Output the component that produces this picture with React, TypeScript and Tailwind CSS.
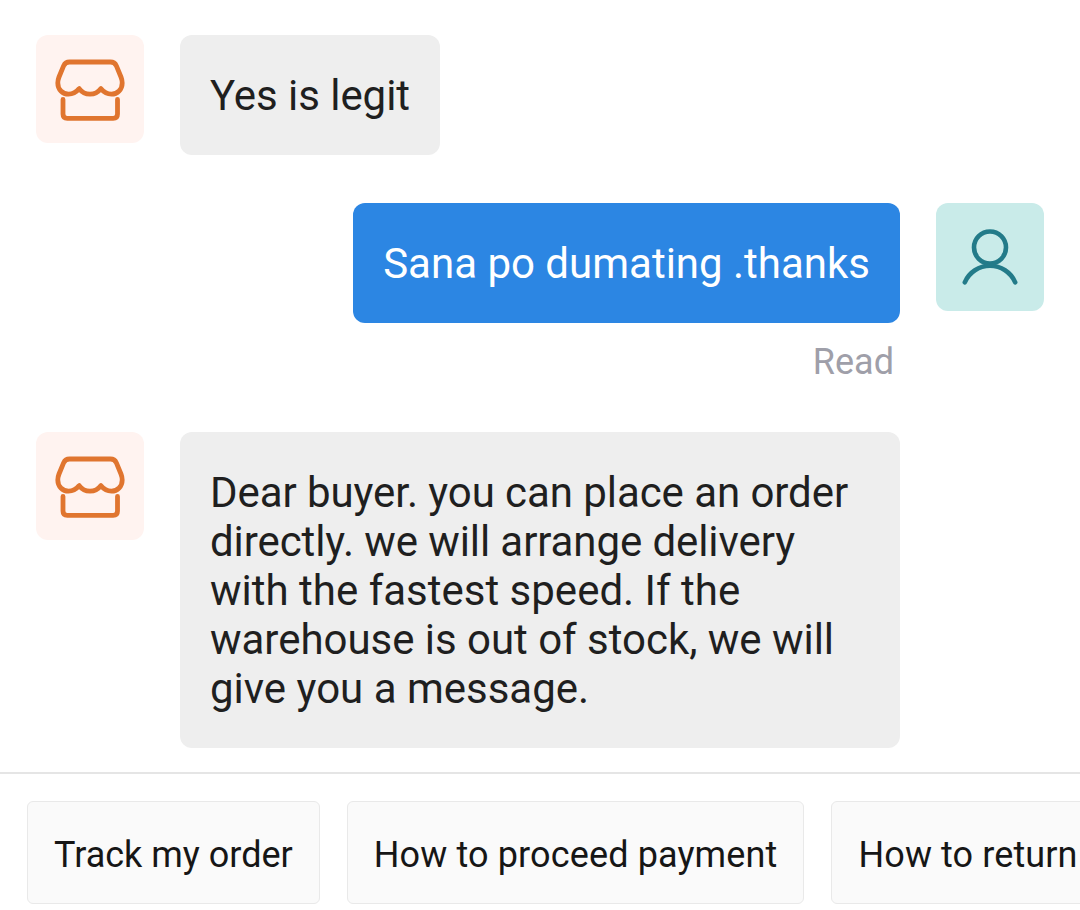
import type { ReactNode } from "react";

function StoreAvatar() {
  return (
    <div className="size-[108px] shrink-0 rounded-xl bg-[#fff3f0]">
      <svg viewBox="0 0 108 108" className="size-full" fill="none" stroke="#e0752f" strokeWidth="4.8" strokeLinecap="round" strokeLinejoin="round">
        <path d="M33.500 27H74.500Q78.600 27 80.300 30.700L85 42Q86.200 45 86.200 48C86.200 54.500 81.500 59.200 75.500 59.200C71 59.200 67.500 57 64.800 53.600C62 57.500 58.300 59.200 54 59.200C49.700 59.200 46 57.500 43.200 53.600C40.500 57 37 59.200 32.500 59.200C26.500 59.200 21.800 54.500 21.800 48Q21.800 45 23 42L27.700 30.700Q29.400 27 33.500 27Z" />
        <path d="M27 64.500V79Q27 83.300 31.300 83.300H77.200Q81.500 83.300 81.500 79V64.500" />
      </svg>
    </div>
  );
}

function BuyerAvatar() {
  return (
    <div className="size-[108px] shrink-0 rounded-xl bg-[#c9ebe9]">
      <svg viewBox="0 0 108 108" className="size-full" fill="none" stroke="#237b89" strokeWidth="4.6" strokeLinecap="round">
        <circle cx="54" cy="44.500" r="16" />
        <path d="M28.800 79.300A27.500 27.500 0 0 1 79.200 79.300" />
      </svg>
    </div>
  );
}

function SellerMessage({ wide = false, children }: { wide?: boolean; children: ReactNode }) {
  return (
    <div className="flex items-start gap-9">
      <StoreAvatar />
      <div
        className={`${wide ? "w-[720px]" : "w-[260px]"} rounded-xl bg-[#eeeeee] px-[30px] pt-9 pb-[35px] text-[42px] leading-[49px] text-[#1f1f1f]`}
      >
        {children}
      </div>
    </div>
  );
}

const quickReplies = [
  { label: "Track my order", spacing: "tracking-normal" },
  { label: "How to proceed payment", spacing: "tracking-[0.13px]" },
  { label: "How to return", spacing: "tracking-[0.1px]" },
];

export default function App() {
  return (
    <main className="flex h-[910px] w-[1080px] flex-col overflow-hidden bg-white font-[Roboto,sans-serif]">
      <section className="h-[772px] shrink-0 px-9 pt-[35px]">
        <SellerMessage>
          <span className="tracking-[-0.05px] whitespace-nowrap">Yes is legit</span>
        </SellerMessage>
        <div className="mt-12 flex items-start justify-end gap-9">
          <div className="flex flex-col items-end">
            <div className="rounded-xl bg-[#2c86e3] px-[30px] pt-9 pb-[35px] text-[42px] leading-[49px] text-white">
              Sana po dumating .thanks
            </div>
            <div className="mt-[18px] pr-1.5 text-[36px] leading-[42px] text-[#9f9fa9]">Read</div>
          </div>
          <BuyerAvatar />
        </div>
        <div className="mt-[49px]">
          <SellerMessage wide>
            <span className="tracking-[-0.07px]">Dear buyer. you can place an order</span>
            <br />
            <span className="tracking-[-0.09px]">directly. we will arrange delivery</span>
            <br />
            with the fastest speed. If the
            <br />
            <span className="tracking-[-0.03px]">warehouse is out of stock, we will</span>
            <br />
            give you a message.
          </SellerMessage>
        </div>
      </section>
      <nav className="flex grow items-start gap-[27px] border-t-2 border-[#e5e5e5] pt-[27px] pl-[27px]">
        {quickReplies.map(({ label, spacing }) => (
          <button
            key={label}
            className={`${spacing} h-[103px] shrink-0 rounded-md border border-[#e9e9e9] bg-[#fafafa] px-[26px] pt-1 text-[36px] leading-[42px] whitespace-nowrap text-[#161616]`}
          >
            {label}
          </button>
        ))}
      </nav>
    </main>
  );
}
